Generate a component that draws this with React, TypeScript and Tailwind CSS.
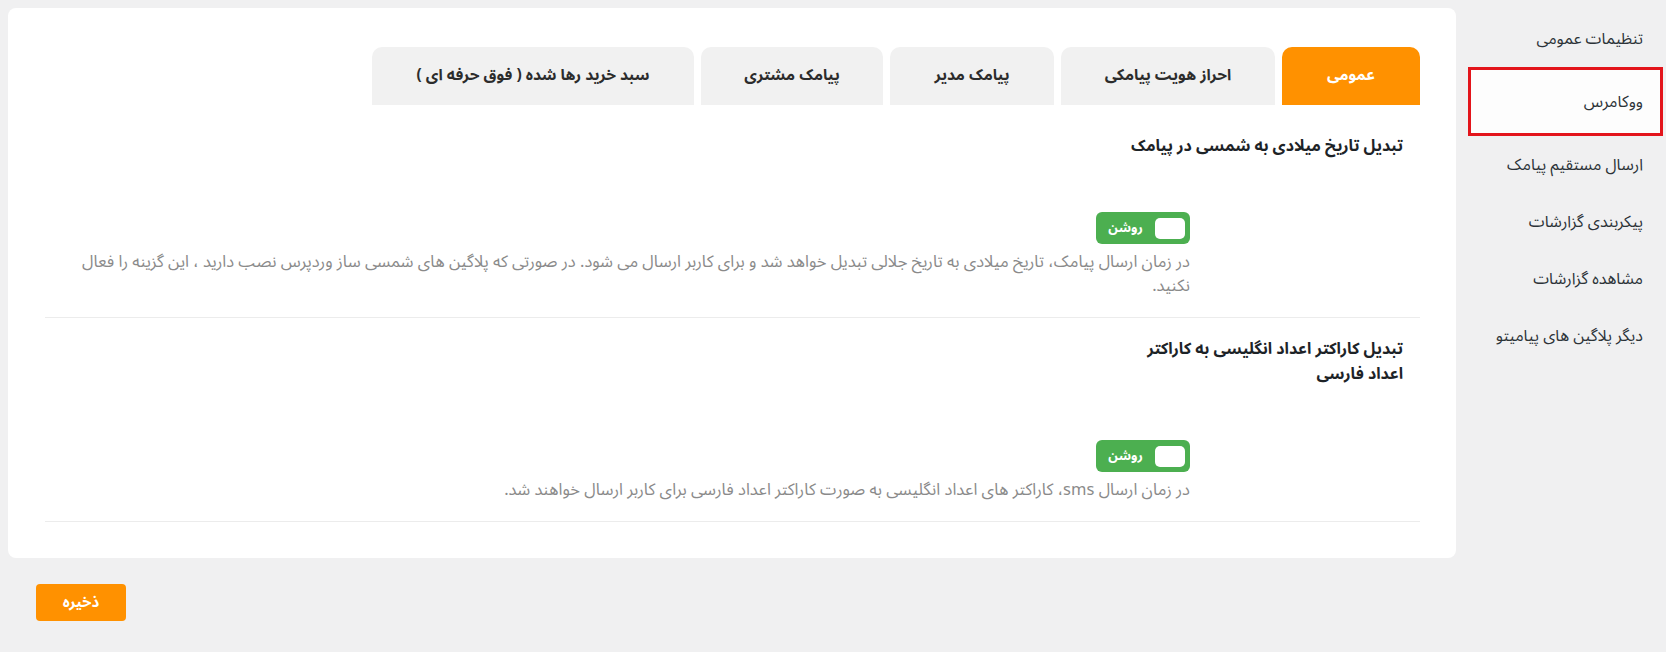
import React from "react";

const FONT = "font-['Noto_Sans_Arabic','Vazirmatn','DejaVu_Sans',sans-serif]";

function Toggle() {
  return (
    <div className="flex h-[32px] w-[94px] items-center rounded-[6px] bg-[#4caf50]">
      <div className="mr-[5px] h-[21px] w-[30px] rounded-[5px] bg-white" />
      <div className="flex-1 text-center text-[13px] font-bold leading-none text-white">روشن</div>
    </div>
  );
}

function Row({ title, desc }: { title: React.ReactNode; desc: React.ReactNode }) {
  return (
    <div className="border-b border-[#ececec] pb-[19px]">
      <div className="pt-[19px] pr-[17px] text-[16px] font-bold leading-[25px] text-[#1d2327]">{title}</div>
      <div className="mr-[230px] mt-[53px]">
        <Toggle />
        <p className="mt-[6px] text-[16.5px] leading-[24px] text-[#8a8a8a]">{desc}</p>
      </div>
    </div>
  );
}

const tabs = [
  { label: "عمومی", w: "w-[138px]", active: true },
  { label: "احراز هویت پیامکی", w: "w-[214px]" },
  { label: "پیامک مدیر", w: "w-[164px]" },
  { label: "پیامک مشتری", w: "w-[182px]" },
  { label: "سبد خرید رها شده ( فوق حرفه ای )", w: "w-[322px]" },
];

const side = [
  "تنظیمات عمومی",
  "ووکامرس",
  "ارسال مستقیم پیامک",
  "پیکربندی گزارشات",
  "مشاهده گزارشات",
  "دیگر پلاگین های پیامیتو",
];

export default function App() {
  return (
    <div dir="rtl" className={`${FONT} flex h-[652px] w-[1666px] gap-[12px] bg-[#f0f0f1] pl-[8px] pr-[3px]`}>
      <aside className="w-[195px] shrink-0 pt-[10px]">
        {side.map((s, i) =>
          i === 1 ? (
            <div
              key={s}
              className="flex h-[69px] items-center border-[3px] border-[#e3141b] bg-[#fdfdfd] pr-[17px] text-[16px] text-[#2c3338]"
            >
              {s}
            </div>
          ) : (
            <div key={s} className="flex h-[57px] items-center pr-[20px] text-[16px] text-[#2c3338]">
              {s}
            </div>
          )
        )}
      </aside>
      <main className="flex-1">
        <div className="mt-[8px] h-[550px] rounded-[8px] bg-white pl-[37px] pr-[36px] pt-[39px]">
          <div className="flex gap-[7px]">
            {tabs.map((t) => (
              <div
                key={t.label}
                className={`flex h-[58px] items-center justify-center rounded-t-[10px] text-[15.5px] font-bold ${t.w} ${
                  t.active ? "bg-[#ff9100] text-white" : "bg-[#f1f1f1] text-[#2c2c2c]"
                }`}
              >
                {t.label}
              </div>
            ))}
          </div>
          <div className="mt-[10px]">
            <Row
              title="تبدیل تاریخ میلادی به شمسی در پیامک"
              desc={
                <>
                  در زمان ارسال پیامک، تاریخ میلادی به تاریخ جلالی تبدیل خواهد شد و برای کاربر ارسال می شود. در صورتی که پلاگین های شمسی ساز وردپرس نصب دارید ، این گزینه را فعال
                  <br />
                  نکنید.
                </>
              }
            />
            <Row
              title={
                <>
                  <span className="block">تبدیل کاراکتر اعداد انگلیسی به کاراکتر</span>
                  <span className="block">اعداد فارسی</span>
                </>
              }
              desc="در زمان ارسال sms، کاراکتر های اعداد انگلیسی به صورت کاراکتر اعداد فارسی برای کاربر ارسال خواهند شد."
            />
          </div>
        </div>
        <div className="mt-[26px] flex justify-end pl-[28px]">
          <button className="h-[37px] w-[90px] rounded-[4px] bg-[#ff9100] text-[15px] font-bold text-white">
            ذخیره
          </button>
        </div>
      </main>
    </div>
  );
}
